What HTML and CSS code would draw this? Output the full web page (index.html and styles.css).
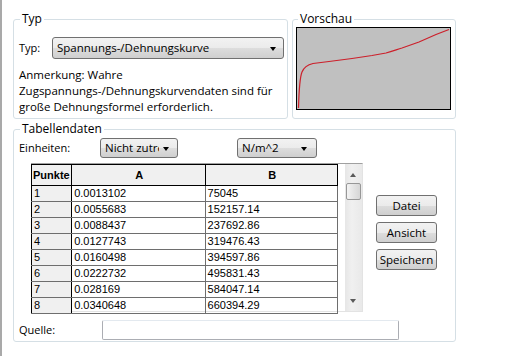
FILE: index.html
```html
<!DOCTYPE html>
<html lang="de">
<head>
    <meta charset="UTF-8">
    <title>Materialdaten - Spannungs-/Dehnungskurve</title>
    <link rel="stylesheet" href="styles.css">
</head>
<body>

<div class="window">
    <!-- Obere Reihe: Typ und Vorschau -->
    <div class="top-row">
        <fieldset class="group group-typ">
            <legend>Typ</legend>
            <div class="field-row">
                <span class="label label-typ">Typ:</span>
                <div class="combo combo-typ"><span class="combo-text">Spannungs-/Dehnungskurve</span><span class="arrow"></span></div>
            </div>
            <p class="note">Anmerkung: Wahre<br>Zugspannungs-/Dehnungskurvendaten sind für<br>große Dehnungsformel erforderlich.</p>
        </fieldset>

        <fieldset class="group group-preview">
            <legend>Vorschau</legend>
            <div class="plot">
                <svg width="153" height="81" viewBox="0 0 153 81">
                    <path d="M1.5,80 C2,62 2.5,50 5,44 C7,39 10,37 16,35.5 L32,33.5 L55,30.5 L75,27.5 L89,25 C96,23 100,21.5 105,20 L122,14 L139,6.5 L152,1.5"
                          fill="none" stroke="#cc1f2a" stroke-width="1.2"/>
                </svg>
            </div>
        </fieldset>
    </div>

    <!-- Tabellendaten -->
    <fieldset class="group group-table">
        <legend>Tabellendaten</legend>
        <div class="field-row units-row">
            <span class="label label-units">Einheiten:</span>
            <div class="combo combo-unit1"><span class="combo-text">Nicht zutreffend</span><span class="arrow"></span></div>
            <div class="combo combo-unit2"><span class="combo-text">N/m^2</span><span class="arrow"></span></div>
        </div>

        <div class="table-row">
            <div class="grid-frame">
                <table class="grid">
                    <thead>
                        <tr><th class="col-num">Punkte</th><th class="col-a">A</th><th class="col-b">B</th></tr>
                    </thead>
                    <tbody id="rows"></tbody>
                </table>
                <div class="scrollbar">
                    <span class="scroll-up"></span>
                    <span class="scroll-thumb"></span>
                    <span class="scroll-down"></span>
                </div>
            </div>
            <div class="buttons">
                <button class="btn">Datei</button>
                <button class="btn">Ansicht</button>
                <button class="btn">Speichern</button>
            </div>
        </div>

        <div class="field-row source-row">
            <span class="label label-source">Quelle:</span>
            <input type="text" class="input-field">
        </div>
    </fieldset>
</div>

<script>
    // Kurvendaten (Dehnung, Spannung)
    const points = [
        ['0.0013102', '75045'],
        ['0.0055683', '152157.14'],
        ['0.0088437', '237692.86'],
        ['0.0127743', '319476.43'],
        ['0.0160498', '394597.86'],
        ['0.0222732', '495831.43'],
        ['0.028169', '584047.14'],
        ['0.0340648', '660394.29']
    ];

    let rows = document.getElementById('rows');
    points.forEach((p, i) => {
        let tr = document.createElement('tr');
        tr.innerHTML = `<td class="col-num">${i + 1}</td><td>${p[0]}</td><td>${p[1]}</td>`;
        rows.appendChild(tr);
    });
</script>

</body>
</html>
```

FILE: styles.css
```css
body {
    margin: 0;
    padding: 0;
    background-color: #fff;
    font-family: 'Open Sans', 'Noto Sans', sans-serif;
    font-size: 11px;
    color: #000;
}

.window {
    width: 520px;
    height: 356px;
    border-left: 2px solid #a9a9a9;
    padding: 12px 0 0 11px;
    box-sizing: border-box;
}

.top-row {
    display: flex;
    gap: 4px;
}

/* Gruppenrahmen */
.group {
    margin: 0;
    padding: 0;
    border: 1px solid #d5dfe5;
    border-radius: 3px;
    min-width: 0;
    box-sizing: border-box;
}

.group legend {
    margin-left: 1px;
    padding: 0 2px;
    font-size: 12px;
    line-height: 14px;
}

.group-typ {
    width: 275px;
    padding: 11px 2px 2px 5px;
}

.group-preview {
    width: 164px;
    padding: 0 3px 8px 3px;
}

.group-preview legend {
    margin-left: 2px;
}

.group-table {
    width: 443px;
    margin-top: 3px;
    padding: 2px 2px 1px 5px;
}

.field-row {
    display: flex;
    align-items: center;
}

.label {
    line-height: 16px;
}

.label-typ {
    width: 33px;
}

.label-units {
    width: 81px;
}

.label-source {
    width: 83px;
}

/* Kombinationsfelder im Win7-Stil */
.combo {
    position: relative;
    display: flex;
    box-sizing: border-box;
    height: 22px;
    line-height: 20px;
    padding: 0 4px 0 4px;
    border: 1px solid #707070;
    border-radius: 3px;
    background: linear-gradient(#f2f2f2 0%, #ebebeb 50%, #dddddd 51%, #cfcfcf 100%);
    font-size: 11.5px;
}

.combo-text {
    flex: 1;
    white-space: nowrap;
    overflow: hidden;
}

.combo .arrow {
    flex: none;
    align-self: center;
    margin: 1px 3px 0 4px;
    border-left: 3.5px solid transparent;
    border-right: 3.5px solid transparent;
    border-top: 4px solid #000;
}

.combo-typ {
    width: 232px;
}

.combo-unit1 {
    width: 78px;
    height: 20px;
    line-height: 18px;
}

.combo-unit1 .arrow {
    margin-right: 4px;
}

.combo-unit2 {
    width: 80px;
    height: 20px;
    line-height: 18px;
    margin-left: 59px;
}

.combo-unit2 .arrow {
    margin-right: 5px;
}

.note {
    margin: 8px 0 0 0;
    line-height: 16px;
    font-size: 11.5px;
}

/* Vorschau-Diagramm */
.plot {
    margin-top: 1px;
    width: 155px;
    height: 83px;
    box-sizing: border-box;
    border: 1px solid #000;
    background-color: #c0c0c0;
}

.plot svg {
    display: block;
}

/* Tabelle */
.units-row {
    height: 20px;
}

.table-row {
    display: flex;
    margin-top: 5px;
}

.grid-frame {
    display: flex;
    margin-left: 12px;
    width: 332px;
    height: 149px;
    box-sizing: border-box;
    border-top: 1px solid #a0a0a0;
    border-right: 1px solid #e3e3e3;
    border-bottom: 1px solid #e3e3e3;
    background-color: #fff;
}

.grid {
    border-collapse: collapse;
    font-family: 'Liberation Sans', Arial, sans-serif;
    font-size: 11px;
    table-layout: fixed;
    width: 307px;
    align-self: flex-start;
}

.grid th,
.grid td {
    padding: 0 0 0 2px;
    border: 1px solid #6e6e6e;
    text-align: left;
    white-space: nowrap;
    overflow: hidden;
    height: 15px;
    line-height: 15px;
}

.grid th {
    height: 20px;
    background-color: #f0f0f0;
    border-color: #000;
    text-align: center;
    font-weight: bold;
}

.grid th.col-num {
    text-align: left;
    padding-left: 1px;
}

.grid td.col-num {
    background-color: #f0f0f0;
    border-left-color: #000;
    border-right-color: #000;
}

.grid tr:first-child td {
    border-top-color: #000;
}

.col-num {
    width: 38px;
}

.col-a {
    width: 130px;
}

.col-b {
    width: 129px;
}

.scrollbar {
    position: relative;
    margin-left: auto;
    width: 17px;
    background: linear-gradient(90deg, #e6e6e6, #f0f0f0 40%, #e9e9e9);
}

.scroll-up,
.scroll-down {
    position: absolute;
    left: 5px;
    border-left: 3.5px solid transparent;
    border-right: 3.5px solid transparent;
}

.scroll-up {
    top: 9px;
    border-bottom: 4px solid #5a5a5a;
}

.scroll-down {
    bottom: 8px;
    border-top: 4px solid #5a5a5a;
}

.scroll-thumb {
    position: absolute;
    left: 1px;
    top: 19px;
    width: 13px;
    height: 15px;
    border: 1px solid #979797;
    border-radius: 2px;
    background: linear-gradient(90deg, #f3f3f3, #e4e4e4 50%, #d6d6d6);
}

.buttons {
    display: flex;
    flex-direction: column;
    gap: 6px;
    margin-left: 13px;
    margin-top: 32px;
}

.btn {
    width: 61px;
    height: 21px;
    padding: 0;
    border: 1px solid #707070;
    border-radius: 3px;
    background: linear-gradient(#f2f2f2 0%, #ebebeb 50%, #dddddd 51%, #cfcfcf 100%);
    font-family: 'Open Sans', 'Noto Sans', sans-serif;
    font-size: 11.5px;
    color: #000;
}

.source-row {
    margin-top: 8px;
}

.input-field {
    width: 297px;
    height: 20px;
    box-sizing: border-box;
    margin: 0;
    border: 1px solid #abadb3;
    border-top-color: #e3e9ef;
    border-radius: 2px;
    background-color: #fff;
}
```
